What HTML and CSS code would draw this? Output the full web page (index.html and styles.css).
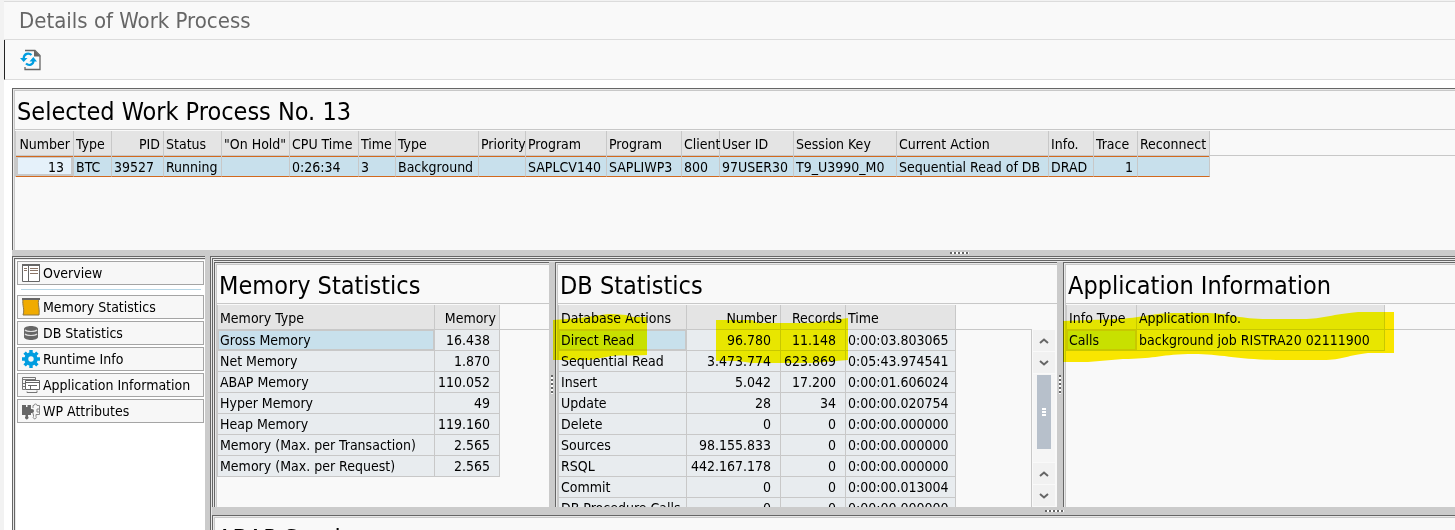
FILE: index.html
```html
<!DOCTYPE html>
<html lang="en">
<head>
<meta charset="utf-8">
<title>Details of Work Process</title>
<link rel="stylesheet" href="styles.css">
</head>
<body>
<div class="app">
  <header class="titlebar"><h1>Details of Work Process</h1></header>
  <div class="toolbar">
    <button class="tool" aria-label="Refresh">
      <svg width="22" height="22" viewBox="0 0 22 22"><path d="M5 1.500h10l5 5v14H5v-2.500" fill="none" stroke="#666" stroke-width="1.300"/><path d="M14 1l6.500 6.500H14z" fill="#666"/><path d="M3.700 9C4 5 8.500 3 11.500 6M13.500 11.500c0 4-4.500 6-7.500 3" fill="none" stroke="#009de0" stroke-width="2.200"/><path d="M0 9h7.500L3.700 13zM9.500 12.500H17L13.300 8z" fill="#009de0"/></svg>
    </button>
  </div>
  <main class="workspace">
    <section class="panel selected">
      <div class="body">
        <h2>Selected Work Process No. 13</h2>
        <table class="grid process">
          <thead><tr><th class="num">Number</th><th>Type</th><th class="num">PID</th><th>Status</th><th>"On Hold"</th><th>CPU Time</th><th>Time</th><th>Type</th><th>Priority</th><th>Program</th><th>Program</th><th>Client</th><th>User ID</th><th>Session Key</th><th>Current Action</th><th>Info.</th><th>Trace</th><th>Reconnect</th><th class="rest"></th></tr></thead>
          <tbody><tr><td class="num focus">13</td><td>BTC</td><td>39527</td><td>Running</td><td></td><td>0:26:34</td><td>3</td><td>Background</td><td></td><td>SAPLCV140</td><td>SAPLIWP3</td><td>800</td><td>97USER30</td><td>T9_U3990_M0</td><td>Sequential Read of DB</td><td>DRAD</td><td class="num trace">1</td><td></td><td class="rest"></td></tr></tbody>
        </table>
      </div>
    </section>
    <div class="splitter across"><i class="grip"></i></div>
    <div class="lower">
      <nav class="nav">
        <button><svg viewBox="0 0 18 18"><path d="M.5.5h17v17H.5z" fill="#fff" stroke="#666"/><path d="M0 0h18v2H0z" fill="#666"/><path d="M6.500 2v15" stroke="#666"/><path d="M2 4.500h3M2 6.500h3M8 4.500h8M8 6.500h8M8 9.500h8" stroke="#8a7466"/></svg>Overview</button>
        <hr>
        <button><svg viewBox="0 0 18 18"><path d="M1 1h16c-2 5 1 8 0 16H1c2-6-1-9 0-16z" fill="#f0ab00" stroke="#8c7645"/><path d="M0 0h18v2H0z" fill="#666"/></svg>Memory Statistics</button>
        <button><svg viewBox="0 0 18 18"><path d="M2 5c0-4 14-4 14 0v8c0 4-14 4-14 0z" fill="#666"/><path d="M3 6c2 2 10 2 12 0M3 10c2 2 10 2 12 0" fill="none" stroke="#ddd" stroke-width="1.200"/></svg>DB Statistics</button>
        <button><svg viewBox="0 0 18 18"><circle cx="9" cy="9" r="4.700" fill="none" stroke="#009de0" stroke-width="4"/><path d="M9 0v4M9 14v4M0 9h4M14 9h4M2.600 2.600l3 3M12.400 12.400l3 3M15.400 2.600l-3 3M2.600 15.400l3-3" stroke="#009de0" stroke-width="3.400"/></svg>Runtime Info</button>
        <button><svg viewBox="0 0 18 18"><path d="M3 13.500H.5v-12h13V4M1 3.500h12M0 7.500h3M0 10.500h3M5 15.500v1h10v-2" fill="none" stroke="#777"/><path d="M3.500 4.500h14v9h-14z" fill="#fff" stroke="#666"/><path d="M3.500 6.500h14M6 9.500h9M8.500 9v4" stroke="#666" fill="none"/></svg>Application Information</button>
        <button><svg viewBox="0 0 18 18"><path d="M0 3h4v2h1.500V3H9v4h1a1.500 1.500 0 0 1 0 4H9v2H6v1.500a1.700 1.700 0 1 1-2.500 0V13H0z" fill="#666"/><path d="M11 6V3.500h1a1.500 1.500 0 1 1 3 0h2.500v9H14v2a1.500 1.500 0 1 1-2.500 0v-2H11V11M17 7h-2v3h2" fill="none" stroke="#888"/></svg>WP Attributes</button>
      </nav>
      <div class="splitter"></div>
      <div class="details">
        <div class="stats">
          <section class="panel">
            <div class="body">
              <h2>Memory Statistics</h2>
              <table class="grid memory">
                <thead><tr><th>Memory Type</th><th class="num">Memory</th><th class="rest"></th></tr></thead>
                <tbody>
                  <tr><td class="current">Gross Memory</td><td class="num">16.438</td></tr>
                  <tr><td>Net Memory</td><td class="num">1.870</td></tr>
                  <tr><td>ABAP Memory</td><td class="num">110.052</td></tr>
                  <tr><td>Hyper Memory</td><td class="num">49</td></tr>
                  <tr><td>Heap Memory</td><td class="num">119.160</td></tr>
                  <tr><td>Memory (Max. per Transaction)</td><td class="num">2.565</td></tr>
                  <tr><td>Memory (Max. per Request)</td><td class="num">2.565</td></tr>
                </tbody>
              </table>
            </div>
          </section>
          <div class="splitter"><i class="grip upright"></i></div>
          <section class="panel">
            <div class="body">
              <h2>DB Statistics</h2>
              <div class="scroller">
                <table class="grid db">
                  <thead><tr><th>Database Actions</th><th class="num">Number</th><th class="num">Records</th><th>Time</th><th class="rest"></th></tr></thead>
                  <tbody>
                    <tr><td class="current">Direct Read</td><td class="num">96.780</td><td class="num">11.148</td><td>0:00:03.803065</td><td class="rest" rowspan="9"></td></tr>
                    <tr><td>Sequential Read</td><td class="num">3.473.774</td><td class="num">623.869</td><td>0:05:43.974541</td></tr>
                    <tr><td>Insert</td><td class="num">5.042</td><td class="num">17.200</td><td>0:00:01.606024</td></tr>
                    <tr><td>Update</td><td class="num">28</td><td class="num">34</td><td>0:00:00.020754</td></tr>
                    <tr><td>Delete</td><td class="num">0</td><td class="num">0</td><td>0:00:00.000000</td></tr>
                    <tr><td>Sources</td><td class="num">98.155.833</td><td class="num">0</td><td>0:00:00.000000</td></tr>
                    <tr><td>RSQL</td><td class="num">442.167.178</td><td class="num">0</td><td>0:00:00.000000</td></tr>
                    <tr><td>Commit</td><td class="num">0</td><td class="num">0</td><td>0:00:00.013004</td></tr>
                    <tr><td>DB Procedure Calls</td><td class="num">0</td><td class="num">0</td><td>0:00:00.000000</td></tr>
                  </tbody>
                </table>
                <div class="scrollbar">
                  <button aria-label="Page up"><svg viewBox="0 0 10 6"><path d="M1 5l4-3.500L9 5"/></svg></button>
                  <button aria-label="Line down"><svg viewBox="0 0 10 6"><path d="M1 1l4 3.500L9 1"/></svg></button>
                  <div class="track"><div class="thumb"><i></i><i></i><i></i></div></div>
                  <button aria-label="Line up"><svg viewBox="0 0 10 6"><path d="M1 5l4-3.500L9 5"/></svg></button>
                  <button aria-label="Page down"><svg viewBox="0 0 10 6"><path d="M1 1l4 3.500L9 1"/></svg></button>
                </div>
              </div>
            </div>
            <svg class="marker" width="300" height="60" viewBox="0 0 300 60"><path d="M3 10L30 8C45 6 55 4 62 4L76 5 83 7H97V45C80 46 70 45 62 46L40 50H3zM166 10L202 10 208 13H262L298 8V50L262 53H202L188 51H166z"/></svg>
          </section>
          <div class="splitter"><i class="grip upright"></i></div>
          <section class="panel">
            <div class="body">
              <h2>Application Information</h2>
              <table class="grid application">
                <thead><tr><th>Info Type</th><th>Application Info.</th><th class="rest"></th></tr></thead>
                <tbody><tr><td class="current">Calls</td><td>background job RISTRA20 02111900</td></tr></tbody>
              </table>
            </div>
            <svg class="marker" width="340" height="60" viewBox="0 0 340 60"><path d="M5 11L58 9C85 8 90 3 120 3H150C175 4 180 9 210 9H245C265 9 275 4 300 2H336V43H310C290 45 285 50 265 50H225C180 50 160 43 130 44C100 45 95 49 65 49L30 52H5z"/></svg>
          </section>
        </div>
        <div class="splitter across"><i class="grip"></i></div>
        <section class="panel"><div class="body"><h2>ABAP Services</h2></div></section>
      </div>
    </div>
  </main>
</div>
</body>
</html>
```
FILE: styles.css
```css
* { box-sizing: border-box; }
body {
  margin: 0;
  height: 100vh;
  overflow: hidden;
  background: #f2f2f2;
  color: #000;
  font: 14px/18px "DejaVu Sans Condensed", "DejaVu Sans", sans-serif;
}
button { font: inherit; color: inherit; }
h1, h2 { margin: 0; font-weight: 400; white-space: nowrap; }
.app { height: 100%; margin-left: 4px; padding-top: 1px; display: flex; flex-direction: column; }
.titlebar { height: 39px; padding: 0 15px; background: #f9f9f9; border-top: 1px solid #dcdcdc; border-bottom: 1px solid #dcdcdc; }
h1 { font-size: 22px; line-height: 38px; color: #666; }
.toolbar { height: 40px; display: flex; align-items: center; padding: 0 15px; background: #f9f9f9; border-left: 1px solid #222; border-bottom: 1px solid #dcdcdc; }
.tool { display: flex; padding: 0; border: 0; background: none; }

.workspace {
  flex: 1;
  min-height: 0;
  padding: 8px 0 0 8px;
  background: #fff;
  display: grid;
  grid-template-rows: 162px 6px minmax(0, 1fr);
}
.panel {
  position: relative;
  min-width: 0;
  min-height: 0;
  padding: 3px 0 0 3px;
  background: #f9f9f9;
  box-shadow: inset 1px 1px #666, inset 2px 2px #e8e8e8, inset 3px 3px #c8c8c8;
}
.body { height: 100%; overflow: hidden; display: flex; flex-direction: column; }
h2 { flex: none; height: 39px; margin-bottom: 1px; padding-left: 2px; border-bottom: 1px solid #c8c8c8; font-size: 25px; line-height: 42px; }

.splitter { display: grid; place-items: center; background: #cbcbcb; }
.splitter.across { justify-items: start; }
.grip { width: 19px; height: 2px; background: repeating-linear-gradient(90deg, #666 0 2px, #fff 2px 4px); }
.across .grip { margin-left: 65%; }
.details > .across .grip { margin-left: 67%; }
.grip.upright { width: 2px; height: 19px; background: repeating-linear-gradient(#666 0 2px, #fff 2px 4px); }

.grid { width: 100%; table-layout: fixed; border-collapse: separate; border-spacing: 0; border-left: 1px solid #c8c8c8; }
.grid th, .grid td { padding: 0 0 0 2px; text-align: left; font-weight: 400; white-space: nowrap; border-right: 1px solid #c8c8c8; border-bottom: 1px solid #c8c8c8; }
.grid th { height: 25px; padding-top: 1px; background: #e4e4e4; }
.grid td { height: 21px; background: #e8ecef; }
.grid .num { text-align: right; }
.grid th.num { padding-right: 3px; }
.grid td.num { padding-right: 9px; }
.grid td.trace { padding-right: 4px; }
.grid .rest { width: auto; background: none; border-right: 0; }
.grid td.rest { border-bottom: 0; box-shadow: none; }
.grid td.current { background: #c8e0ec; box-shadow: inset 0 0 0 1px #c8c8c8; }

.process td { padding-top: 1px; border-bottom-color: #d2691e; background: #c8e0ec; box-shadow: inset 0 1px #d2691e; }
.process td.focus { background: #e5f1fa; box-shadow: inset 0 1px #d2691e, inset 0 0 0 2px #c8c8c8; }
.process th:nth-child(1) { width: 58px; }
.process th:nth-child(2) { width: 38px; }
.process th:nth-child(3) { width: 52px; }
.process th:nth-child(4) { width: 58px; }
.process th:nth-child(5) { width: 68px; }
.process th:nth-child(6) { width: 69px; }
.process th:nth-child(7) { width: 37px; }
.process th:nth-child(8) { width: 83px; }
.process th:nth-child(9) { width: 47px; }
.process th:nth-child(10) { width: 81px; }
.process th:nth-child(11) { width: 75px; }
.process th:nth-child(12) { width: 38px; }
.process th:nth-child(13) { width: 74px; }
.process th:nth-child(14) { width: 103px; }
.process th:nth-child(15) { width: 152px; }
.process th:nth-child(16) { width: 45px; }
.process th:nth-child(17) { width: 44px; }
.process th:nth-child(18) { width: 72px; }
.memory th:nth-child(1) { width: 217px; }
.memory th:nth-child(2) { width: 65px; }
.db th:nth-child(1) { width: 128px; }
.db th:nth-child(2) { width: 94px; }
.db th:nth-child(3) { width: 65px; }
.db th:nth-child(4) { width: 110px; }
.db td.rest { border-right: 1px solid #c8c8c8; }
.application th:nth-child(1) { width: 70px; }
.application th:nth-child(2) { width: 248px; }

.lower {
  display: grid;
  grid-template-columns: 193px 5px minmax(0, 1fr);
  min-height: 0;
  box-shadow: inset 0 1px #666;
}
.nav {
  padding: 5px 1px 0 5px;
  display: flex;
  flex-direction: column;
  gap: 2px;
  box-shadow: inset 1px 1px #666, inset 2px 2px #e8e8e8, inset 3px 3px #666, inset 4px 4px #e8e8e8;
}
.nav button { height: 24px; padding: 0 4px; display: flex; align-items: center; gap: 3px; border: 1px solid #a5a5a5; background: #f7f7f7; white-space: nowrap; }
.nav svg { width: 18px; height: 18px; flex: none; }
.nav hr { width: 180px; margin: 2px auto 3px; border: 0; border-top: 1px solid #b5d5e5; }

.details {
  min-width: 0;
  min-height: 0;
  padding: 2px 0 0 2px;
  display: grid;
  grid-template-rows: 249px 8px minmax(0, 1fr);
  background: #e8e8e8;
  box-shadow: inset 1px 1px #666;
}
.stats {
  padding: 4px 0 0 2px;
  display: grid;
  grid-template-columns: minmax(0, 335fr) 6px minmax(0, 502fr) 6px minmax(0, 392fr);
  box-shadow: inset 1px 1px #666, inset 2px 2px #e8e8e8, inset 2px 3px #666;
}
.scroller { display: flex; align-items: flex-start; min-height: 0; }
.scroller .grid { flex: 1; }
.scrollbar { width: 22px; height: 176px; margin: 25px 2px 0 1px; display: flex; flex-direction: column; gap: 1px; background: #f9f9f9; }
.scrollbar button { height: 21px; padding: 0; display: grid; place-items: center; border: 0; background: #f1f1f1; }
.scrollbar svg { width: 10px; height: 6px; fill: none; stroke: #666; stroke-width: 2; }
.track { flex: 1; padding: 1px 4px; background: #f5f5f5; }
.thumb { height: 74px; display: flex; flex-direction: column; align-items: center; justify-content: center; gap: 1px; background: #b7c0cb; }
.thumb i { width: 4px; height: 2px; background: #fff; }
.marker { position: absolute; z-index: 1; left: -5px; top: 48px; fill: #f9e600; mix-blend-mode: darken; pointer-events: none; }
```
